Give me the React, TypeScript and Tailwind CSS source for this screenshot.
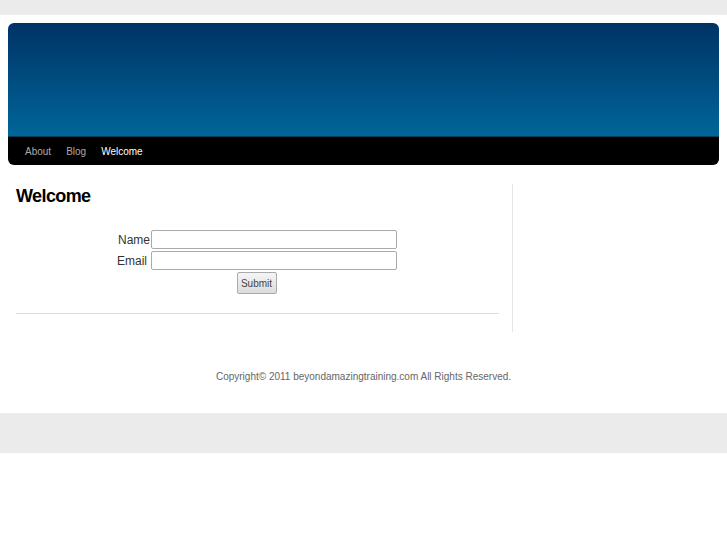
export default function App() {
  return (
    <div className="min-h-[545px] w-full bg-white font-['Liberation_Sans',Arial,sans-serif]">
      {/* top band */}
      <div className="h-[15px] w-full bg-[#ebebeb]"></div>

      {/* header */}
      <div className="mx-[8px] mt-[8px] w-[711px] rounded-[6px] overflow-hidden">
        <div className="h-[113px] bg-gradient-to-b from-[#003366] to-[#006699]"></div>
        <div className="h-px bg-[#0a3c5a]"></div>
        <nav className="h-[28px] bg-black flex items-center pl-[17px] gap-[15px] text-[10px]">
          <a className="text-[#aaaaaa]">About</a>
          <a className="text-[#aaaaaa]">Blog</a>
          <a className="text-white">Welcome</a>
        </nav>
      </div>

      {/* content */}
      <div className="flex pt-[19px]">
        <div className="w-[513px] pl-[16px] pr-[13px] border-r border-[#e5e5e5] h-[148px]">
          <h1 className="text-[18px] font-bold text-black leading-[24px] tracking-[-0.6px]">Welcome</h1>
          <form className="mt-[22px] pr-[2px] flex flex-col items-center" onSubmit={(e) => e.preventDefault()}>
            <div className="flex flex-col gap-[2px] text-[12px] text-[#333]">
              <div className="flex items-center">
                <label className="w-[35px] text-right pr-px">Name</label>
                <input className="w-[246px] h-[19px] border border-[#aaa] rounded-[2px] bg-white" />
              </div>
              <div className="flex items-center">
                <label className="w-[35px] text-right pr-[4px]">Email</label>
                <input className="w-[246px] h-[19px] border border-[#aaa] rounded-[2px] bg-white" />
              </div>
            </div>
            <button
              type="submit"
              className="mt-[2px] w-[40px] h-[22px] text-[10px] text-[#444] border border-[#aaa] rounded-[2px] bg-gradient-to-b from-[#f5f5f5] to-[#dcdcdc]"
            >
              Submit
            </button>
          </form>
          <div className="mt-[19px] h-px bg-[#dddddd]"></div>
        </div>
        <div className="flex-1"></div>
      </div>

      {/* copyright */}
      <p className="mt-[37px] text-center text-[10px] text-[#666]">
        Copyright© 2011 beyondamazingtraining.com All Rights Reserved.
      </p>

      {/* footer band */}
      <div className="mt-[29px] h-[40px] w-full bg-[#ebebeb]"></div>
    </div>
  );
}
